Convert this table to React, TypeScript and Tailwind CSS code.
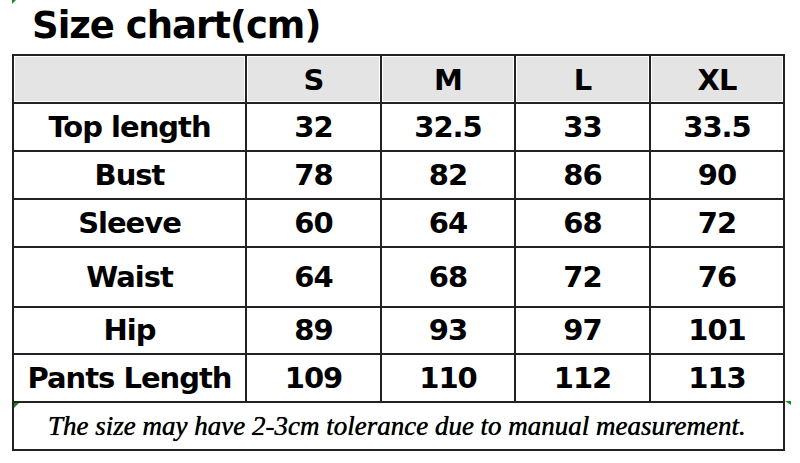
import React from "react";

const rows: { label: string; vals: string[]; h: string }[] = [
  { label: "Top length", vals: ["32", "32.5", "33", "33.5"], h: "h-[46px]" },
  { label: "Bust", vals: ["78", "82", "86", "90"], h: "h-[46px]" },
  { label: "Sleeve", vals: ["60", "64", "68", "72"], h: "h-[46px]" },
  { label: "Waist", vals: ["64", "68", "72", "76"], h: "h-[58px]" },
  { label: "Hip", vals: ["89", "93", "97", "101"], h: "h-[45px]" },
  { label: "Pants Length", vals: ["109", "110", "112", "113"], h: "h-[46px]" },
];

const cell =
  "bg-white flex items-center justify-center text-[29px] font-bold tracking-[-1px] text-black leading-none";

export default function App() {
  return (
    <div className="w-[800px] h-[463px] bg-white relative overflow-hidden" style={{ fontFamily: '"DejaVu Sans", Verdana, sans-serif' }}>
      <div className="absolute left-[12px] top-0 w-0 h-0 border-l-[4px] border-l-[#1a8a1a] border-b-[4px] border-b-transparent" />
      <div className="h-[54px] pl-[32px] pt-[3px]">
        <div className="text-[37px] font-bold tracking-[-1px] text-black leading-[46px]">Size chart(cm)</div>
      </div>
      <div className="ml-[12px] w-[773px] relative">
        <div className="grid grid-cols-[231px_133px_132px_133px_132px] gap-[2px] p-[2px] bg-[#222]">
          <div className="h-[46px] bg-[#e4e4e4] shadow-[inset_0_0_0_1px_#ffffff]" />
          {["S", "M", "L", "XL"].map((s) => (
            <div key={s} className={cell + " h-[46px] !bg-[#e4e4e4] shadow-[inset_0_0_0_1px_#ffffff] pt-[2px]"}>
              {s}
            </div>
          ))}
          {rows.map((r) => (
            <React.Fragment key={r.label}>
              <div className={cell + " " + r.h}>{r.label}</div>
              {r.vals.map((v, i) => (
                <div key={i} className={cell + " " + r.h}>
                  {v}
                </div>
              ))}
            </React.Fragment>
          ))}
          <div
            className="col-span-5 h-[46px] bg-white flex items-center pl-[34px] text-[27px] italic text-black [text-shadow:0_0_0.7px_#000]"
            style={{ fontFamily: '"Liberation Serif", "Times New Roman", serif' }}
          >
            The size may have 2-3cm tolerance due to manual measurement.
          </div>
        </div>
        <div className="absolute left-[2px] top-[349px] w-0 h-0 border-t-[5px] border-t-[#1a8a1a] border-r-[5px] border-r-transparent" />
        <div className="absolute left-[773px] top-[347px] w-0 h-0 border-t-[4px] border-t-[#1a8a1a] border-l-[6px] border-l-transparent" />
      </div>
    </div>
  );
}
